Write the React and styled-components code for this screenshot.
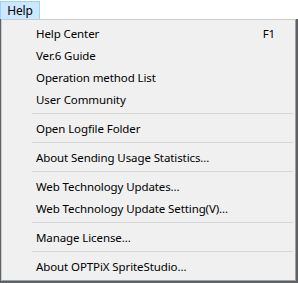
import React from 'react'
import styled, { createGlobalStyle } from 'styled-components'

const GlobalStyle = createGlobalStyle`
  html, body {
    margin: 0;
    padding: 0;
    background: #ffffff;
  }
  body {
    font-family: "Noto Sans", "Open Sans", sans-serif;
    font-size: 11.5px;
    letter-spacing: -0.1px;
  }
`;

const Screen = styled.div`
  width: 298px;
  height: 283px;
  display: flex;
  flex-direction: column;
  overflow: hidden;
`;

const MenuBar = styled.div`
  height: 19px;
  display: flex;
  align-items: stretch;
  background: #ffffff;
`;

const MenuBarButton = styled.div`
  box-sizing: border-box;
  width: 40px;
  margin-top: 1px;
  height: 18px;
  display: flex;
  align-items: center;
  justify-content: center;
  background: #cce8ff;
  border: 1px solid #99d1ff;
  border-bottom: none;
  color: #000;
  font-size: 12px;
`;

const Backdrop = styled.div`
  flex: 1;
  display: flex;
  align-items: flex-start;
  padding: 0 2px 0 1px;
  background: #5d6168;
`;

const Menu = styled.ul`
  box-sizing: border-box;
  list-style: none;
  margin: 0;
  flex: 1;
  padding: 2px 0 3px 0;
  background: #f0f0f0;
  border: 1px solid #a0a0a0;
  border-color: #cccccc #a0a0a0 #a0a0a0 #cccccc;
`;

const Item = styled.li`
  height: 22px;
  display: flex;
  align-items: center;
  justify-content: space-between;
  padding: 0 20px 0 34px;
  color: #000;
  white-space: nowrap;
`;

const Shortcut = styled.span`
  color: #000;
`;

const Separator = styled.li`
  height: 7px;
  display: flex;
  align-items: center;
  margin: 0 2px 0 30px;
  &::after {
    content: '';
    flex: 1;
    height: 1px;
    background: #d7d7d7;
  }
`;

const groups = [
  [
    { label: 'Help Center', key: 'F1' },
    { label: 'Ver.6 Guide' },
    { label: 'Operation method List' },
    { label: 'User Community' },
  ],
  [{ label: 'Open Logfile Folder' }],
  [{ label: 'About Sending Usage Statistics...' }],
  [
    { label: 'Web Technology Updates...' },
    { label: 'Web Technology Update Setting(V)...' },
  ],
  [{ label: 'Manage License...' }],
  [{ label: 'About OPTPiX SpriteStudio...' }],
];

function App() {
  return (
    <>
      <GlobalStyle />
      <Screen>
        <MenuBar>
          <MenuBarButton>Help</MenuBarButton>
        </MenuBar>
        <Backdrop>
          <Menu>
            {groups.map((group, gi) => (
              <React.Fragment key={gi}>
                {gi > 0 && <Separator />}
                {group.map((item) => (
                  <Item key={item.label}>
                    <span>{item.label}</span>
                    {item.key && <Shortcut>{item.key}</Shortcut>}
                  </Item>
                ))}
              </React.Fragment>
            ))}
          </Menu>
        </Backdrop>
      </Screen>
    </>
  );
}

export default App
